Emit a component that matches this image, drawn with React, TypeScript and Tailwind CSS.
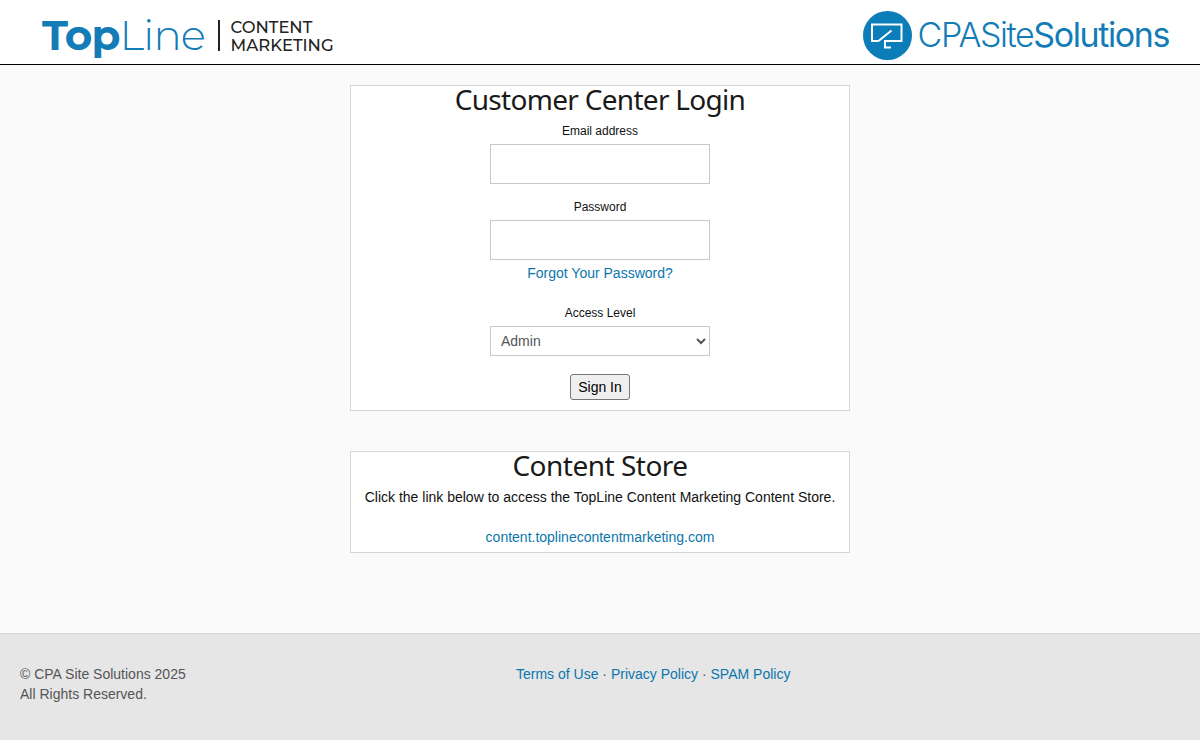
const font = "font-['Liberation_Sans',Arial,sans-serif]";

function TopLineLogo() {
  return (
    <div className="flex items-center">
      <div className="font-['Montserrat','Lato',sans-serif] text-[42px] leading-none tracking-[-0.85px] text-[#137cb7] flex">
        <span className="font-bold">Top</span>
        <span className="font-light">Line</span>
      </div>
      <div className="ml-[13px] w-[1.5px] h-[31px] bg-[#222]" />
      <div className="ml-[11px] font-['Montserrat','Lato',sans-serif] font-medium text-[#222] text-[16.4px] leading-[18px] mt-[1px]">
        <div>CONTENT</div>
        <div>MARKETING</div>
      </div>
    </div>
  );
}

function CpaLogo() {
  return (
    <div className="flex items-center">
      <svg width="49" height="49" viewBox="0 0 49 49">
        <circle cx="24.5" cy="24.5" r="24.5" fill="#0b7db8" />
        <path
          d="M15.5 30 H9 V13.5 H38.5 V30 H22 V36.5 H28 M15.5 30 L28.5 19.5"
          fill="none"
          stroke="#fff"
          strokeWidth="2"
        />
      </svg>
      <div className="ml-[6px] font-['Inter',sans-serif] text-[34px] leading-none tracking-[-1.4px] text-[#137cb7] flex">
        <span className="font-light">CPASite</span>
        <span className="font-normal">Solutions</span>
      </div>
    </div>
  );
}

function Field({ label, type }: { label: string; type: string }) {
  return (
    <div className="flex flex-col items-center">
      <label className="text-xs leading-[16px] text-[#111]">{label}</label>
      <input
        type={type}
        className="mt-[5px] w-[220px] h-10 border border-[#c8c8c8] bg-white"
      />
    </div>
  );
}

export default function App() {
  return (
    <div className={`${font} min-h-[740px] flex flex-col bg-[#fafafa] text-sm text-[#111]`}>
      <header className="h-[65px] bg-white border-b border-black flex justify-between items-center pl-[42px] pr-[31px] pt-[6px]">
        <TopLineLogo />
        <CpaLogo />
      </header>

      <main className="flex-1 flex flex-col items-center pt-5">
        <section className="w-[500px] h-[326px] border border-[#d6d6d6] bg-white flex flex-col items-center">
          <h1 className="font-['Noto_Sans',sans-serif] text-[28px] leading-[26px] tracking-[-0.7px] text-[#1a1a1a]">
            Customer Center Login
          </h1>
          <div className="mt-[11px]">
            <Field label="Email address" type="email" />
          </div>
          <div className="mt-[15px]">
            <Field label="Password" type="password" />
          </div>
          <a href="#" className="mt-[5px] leading-[16px] text-[#0b76ad]">
            Forgot Your Password?
          </a>
          <div className="mt-[24px] flex flex-col items-center">
            <label className="text-xs leading-[16px]">Access Level</label>
            <select className="mt-[5px] w-[220px] h-[30px] border border-[#c8c8c8] bg-white pl-[6px] text-sm text-[#555]">
              <option>Admin</option>
            </select>
          </div>
          <button className="mt-[18px] w-[60px] h-[26px] border border-[#767676] rounded-[3px] bg-[#efefef] text-sm text-black">
            Sign In
          </button>
        </section>

        <section className="mt-10 w-[500px] h-[102px] border border-[#d6d6d6] bg-white flex flex-col items-center">
          <h2 className="font-['Noto_Sans',sans-serif] text-[28px] leading-[26px] tracking-[-0.5px] text-[#1a1a1a]">
            Content Store
          </h2>
          <p className="mt-[9px] leading-[20px]">
            Click the link below to access the TopLine Content Marketing Content Store.
          </p>
          <a href="#" className="mt-[20px] leading-[20px] text-[#0b76ad]">
            content.toplinecontentmarketing.com
          </a>
        </section>
      </main>

      <footer className="h-[107px] bg-[#e6e6e6] border-t border-[#d6d6d6] flex pl-5 pt-[30px] leading-[20px] text-[#555]">
        <div className="w-[496px]">
          <div>© CPA Site Solutions 2025</div>
          <div>All Rights Reserved.</div>
        </div>
        <div className="text-[#0b76ad]">
          <a href="#">Terms of Use</a>
          <span className="text-[#555]"> · </span>
          <a href="#">Privacy Policy</a>
          <span className="text-[#555]"> · </span>
          <a href="#">SPAM Policy</a>
        </div>
      </footer>
    </div>
  );
}
